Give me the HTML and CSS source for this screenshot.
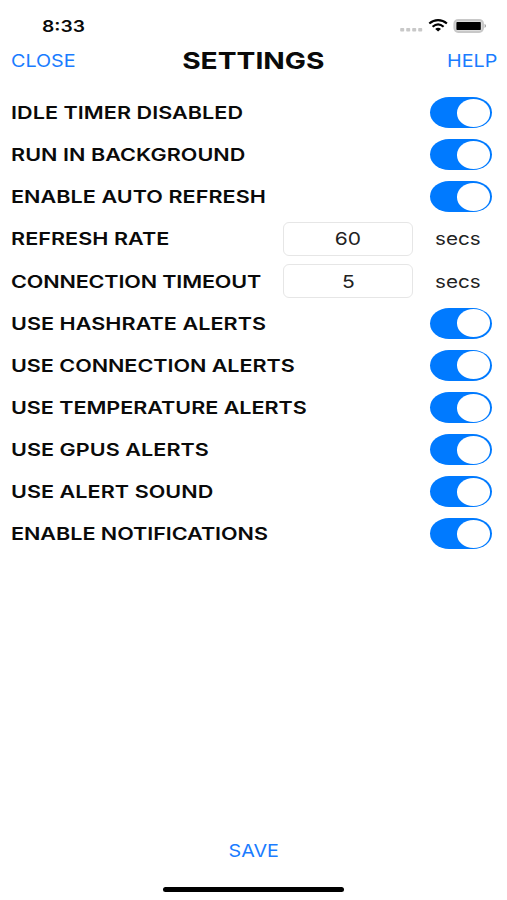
FILE: index.html
```html
<!DOCTYPE html>
<html lang="en">
<head>
<meta charset="utf-8">
<title>Settings</title>
<link rel="stylesheet" href="styles.css">
</head>
<body>
<div class="screen">
  <header class="status">
    <span class="wide time">8:33</span>
    <svg class="status-icons" width="88" height="16" viewBox="0 0 88 16">
      <g fill="#c8c8c8"><rect x="1.2" y="10" width="4" height="3.6" rx="0.8"/><rect x="7.2" y="10" width="4" height="3.6" rx="0.8"/><rect x="13.2" y="10" width="4" height="3.6" rx="0.8"/><rect x="19.2" y="10" width="4" height="3.6" rx="0.8"/></g>
      <g fill="none" stroke="#000" stroke-width="2.2"><path d="M30.3 5.5C35.5 1.1 42.7 1.1 47.9 5.5"/><path d="M33.6 8.7C37 5.7 41.2 5.7 44.6 8.7"/></g>
      <path d="M36.2 10.9C37.9 9.5 40.3 9.5 42 10.9L39.1 13.4Z"/>
      <rect x="55.4" y="1.9" width="28.6" height="12" rx="3.8" fill="#ddd" stroke="#c8c8c8" stroke-width="2"/>
      <rect x="57.4" y="3.9" width="24.4" height="8.2" rx="0.8"/>
      <path d="M85.6 5.8Q88.4 7.9 85.6 10Z" fill="#999"/>
    </svg>
  </header>
  <nav class="bar">
    <a class="wide link close">CLOSE</a>
    <h1 class="wide">SETTINGS</h1>
    <a class="wide link help">HELP</a>
  </nav>
  <main class="list">
    <div class="row"><span class="wide label">IDLE TIMER DISABLED</span><i class="switch"></i></div>
    <div class="row"><span class="wide label">RUN IN BACKGROUND</span><i class="switch"></i></div>
    <div class="row"><span class="wide label">ENABLE AUTO REFRESH</span><i class="switch"></i></div>
    <div class="row"><span class="wide label">REFRESH RATE</span><div class="field"><span class="wide">60</span></div><div class="unit"><span class="wide">secs</span></div></div>
    <div class="row"><span class="wide label tight">CONNECTION TIMEOUT</span><div class="field"><span class="wide">5</span></div><div class="unit"><span class="wide">secs</span></div></div>
    <div class="row"><span class="wide label">USE HASHRATE ALERTS</span><i class="switch"></i></div>
    <div class="row"><span class="wide label even">USE CONNECTION ALERTS</span><i class="switch"></i></div>
    <div class="row"><span class="wide label even">USE TEMPERATURE ALERTS</span><i class="switch"></i></div>
    <div class="row"><span class="wide label">USE GPUS ALERTS</span><i class="switch"></i></div>
    <div class="row"><span class="wide label">USE ALERT SOUND</span><i class="switch"></i></div>
    <div class="row"><span class="wide label even">ENABLE NOTIFICATIONS</span><i class="switch"></i></div>
  </main>
  <footer class="footer">
    <a class="wide link save">SAVE</a>
    <div class="home"></div>
  </footer>
</div>
</body>
</html>
```
FILE: styles.css
```css
* { box-sizing: border-box; }
body { margin: 0; background: #fff; color: #0a0a0a; font-family: Inter, "Liberation Sans", sans-serif; font-size: 17.5px; }
.screen { height: 900px; display: flex; flex-direction: column; }

/* Text is set with an extended width */
.wide { display: inline-block; white-space: nowrap; line-height: 24px; padding-top: 1px; transform: scaleX(1.2); }

.status { height: 40px; padding: 18px 20px 0 42px; display: flex; justify-content: space-between; align-items: flex-start; }
.time { font-size: 16px; font-weight: 600; line-height: 16px; padding-top: 0; transform-origin: left; }
.status-icons { display: block; }

.bar { height: 40px; padding: 0 10px 0 11px; display: grid; grid-template-columns: 1fr auto 1fr; align-items: center; }
.link { color: #1a7cff; font-size: 17px; transform: scaleX(1.16); }
.close { justify-self: start; transform-origin: left; }
.help { justify-self: end; transform-origin: right; }
h1 { margin: 0; font-size: 23.5px; font-weight: 700; position: relative; left: -1px; }

.list { padding: 11.5px 15px 0 11px; }
.row { height: 42.15px; display: flex; align-items: center; }
.label { width: 272px; flex: none; margin-right: auto; font-size: 17.5px; font-weight: 620; letter-spacing: 0.05px; transform: scaleX(1.232); transform-origin: left; }
.even { letter-spacing: -0.02px; }
.tight { letter-spacing: -0.11px; }
.switch { width: 62.5px; height: 31px; padding: 1.5px 2px; display: flex; justify-content: flex-end; border-radius: 19px / 15.5px; background: #007aff; }
.switch::before { content: ""; width: 33.5px; height: 28px; border-radius: 50%; background: #fff; }
.field { width: 130px; height: 34.5px; flex: none; display: flex; align-items: center; justify-content: center; border: 1px solid #e6e6e6; border-radius: 6px; }
.unit { width: 57px; margin-left: 22px; flex: none; }
.field, .unit { color: #222; }
.unit .wide { transform: scaleX(1.18); transform-origin: left; }

.footer { margin-top: auto; height: 62px; display: flex; flex-direction: column; align-items: center; }
.home { width: 181px; height: 5px; margin-top: 24px; border-radius: 3px; background: #000; }
```
